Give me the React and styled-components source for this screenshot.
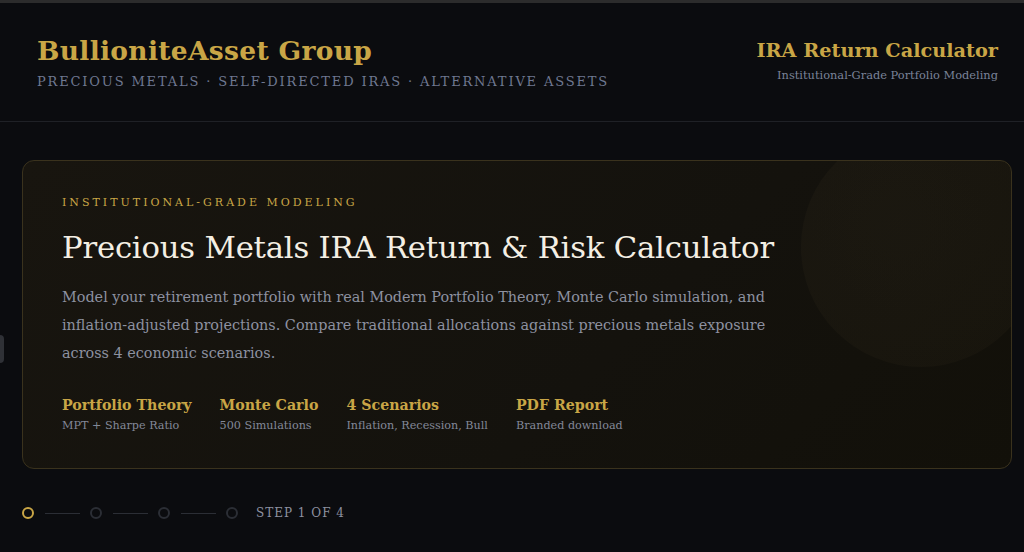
import React from 'react';
import styled, { createGlobalStyle } from 'styled-components';

const GlobalStyle = createGlobalStyle`
  html, body {
    margin: 0;
    padding: 0;
    background: #0b0c0f;
    font-family: "DejaVu Serif", Georgia, serif;
  }
  * { box-sizing: border-box; }
`;

const Page = styled.div`
  min-height: 552px;
  background: #0b0c0f;
  border-top: 3px solid #2c2c2c;
  position: relative;
  overflow: hidden;
`;

const SideTab = styled.div`
  position: absolute;
  left: -6px;
  top: 332px;
  width: 10px;
  height: 28px;
  border-radius: 4px;
  background: #2f3136;
`;

const Header = styled.header`
  display: flex;
  justify-content: space-between;
  align-items: flex-start;
  padding: 31px 26px 0 37px;
  height: 119px;
  border-bottom: 1px solid #1f2126;
`;

const Brand = styled.div`
  display: flex;
  flex-direction: column;
`;

const BrandName = styled.h1`
  margin: 0;
  font-size: 26.5px;
  font-weight: 700;
  color: #c9a646;
  letter-spacing: 0.3px;
  line-height: 34px;
`;

const BrandTag = styled.div`
  margin-top: 6px;
  font-size: 13px;
  letter-spacing: 1.85px;
  color: #6f7891;
  text-transform: uppercase;
`;

const ToolInfo = styled.div`
  display: flex;
  flex-direction: column;
  align-items: flex-end;
  padding-top: 3px;
`;

const ToolName = styled.div`
  font-size: 19.3px;
  font-weight: 700;
  color: #c9a646;
  line-height: 28px;
`;

const ToolSub = styled.div`
  margin-top: 3px;
  font-size: 11.4px;
  color: #7a8399;
`;

const Main = styled.main`
  padding: 38px 12px 0 22px;
`;

const HeroCard = styled.section`
  position: relative;
  overflow: hidden;
  height: 309px;
  padding: 35px 39px 0;
  border: 1px solid #3a321d;
  border-radius: 12px;
  background: linear-gradient(135deg, #18150f 0%, #14120d 60%, #121009 100%);
`;

const Orb = styled.div`
  position: absolute;
  top: -34px;
  left: 778px;
  width: 240px;
  height: 240px;
  border-radius: 50%;
  background: radial-gradient(circle at 40% 40%, rgba(60, 52, 34, 0.18), rgba(40, 34, 22, 0.22));
`;

const Eyebrow = styled.div`
  font-size: 11px;
  letter-spacing: 3px;
  color: #c9a646;
  text-transform: uppercase;
`;

const HeroTitle = styled.h2`
  margin: 19px 0 0;
  font-size: 30.7px;
  font-weight: 400;
  color: #f4efe4;
  line-height: 40px;
  letter-spacing: -0.2px;
`;

const HeroText = styled.p`
  margin: 15px 0 0;
  max-width: 730px;
  font-size: 14.4px;
  line-height: 28px;
  color: #8d91a0;
`;

const Features = styled.div`
  display: flex;
  gap: 28px;
  margin-top: 28px;
`;

const Feature = styled.div`
  display: flex;
  flex-direction: column;
`;

const FeatureTitle = styled.div`
  font-size: 14.2px;
  font-weight: 700;
  color: #c9a646;
  line-height: 20px;
`;

const FeatureSub = styled.div`
  margin-top: 4px;
  font-size: 11.2px;
  color: #838898;
`;

const Stepper = styled.div`
  display: flex;
  align-items: center;
  padding: 37px 0 0 22px;
`;

const Dot = styled.div`
  width: 12px;
  height: 12px;
  border-radius: 50%;
  border: 2px solid ${(p) => (p.active ? '#c9a646' : '#2b2e35')};
`;

const Line = styled.div`
  width: 35px;
  height: 1px;
  margin: 0 10px 0 11px;
  background: #2b2e35;
`;

const StepLabel = styled.div`
  margin-left: 18px;
  font-size: 12px;
  letter-spacing: 1px;
  color: #8d91a0;
`;

const features = [
  { title: 'Portfolio Theory', sub: 'MPT + Sharpe Ratio' },
  { title: 'Monte Carlo', sub: '500 Simulations' },
  { title: '4 Scenarios', sub: 'Inflation, Recession, Bull' },
  { title: 'PDF Report', sub: 'Branded download' },
];

const App = () => {
  return (
    <>
      <GlobalStyle />
      <Page>
        <SideTab />
        <Header>
          <Brand>
            <BrandName>BullioniteAsset Group</BrandName>
            <BrandTag>Precious Metals · Self-Directed IRAs · Alternative Assets</BrandTag>
          </Brand>
          <ToolInfo>
            <ToolName>IRA Return Calculator</ToolName>
            <ToolSub>Institutional-Grade Portfolio Modeling</ToolSub>
          </ToolInfo>
        </Header>
        <Main>
          <HeroCard>
            <Orb />
            <Eyebrow>Institutional-Grade Modeling</Eyebrow>
            <HeroTitle>Precious Metals IRA Return &amp; Risk Calculator</HeroTitle>
            <HeroText>
              Model your retirement portfolio with real Modern Portfolio Theory, Monte Carlo simulation, and
              inflation-adjusted projections. Compare traditional allocations against precious metals exposure
              across 4 economic scenarios.
            </HeroText>
            <Features>
              {features.map((f) => (
                <Feature key={f.title}>
                  <FeatureTitle>{f.title}</FeatureTitle>
                  <FeatureSub>{f.sub}</FeatureSub>
                </Feature>
              ))}
            </Features>
          </HeroCard>
        </Main>
        <Stepper>
          <Dot active />
          <Line />
          <Dot />
          <Line />
          <Dot />
          <Line />
          <Dot />
          <StepLabel>STEP 1 OF 4</StepLabel>
        </Stepper>
      </Page>
    </>
  );
};

export default App;
